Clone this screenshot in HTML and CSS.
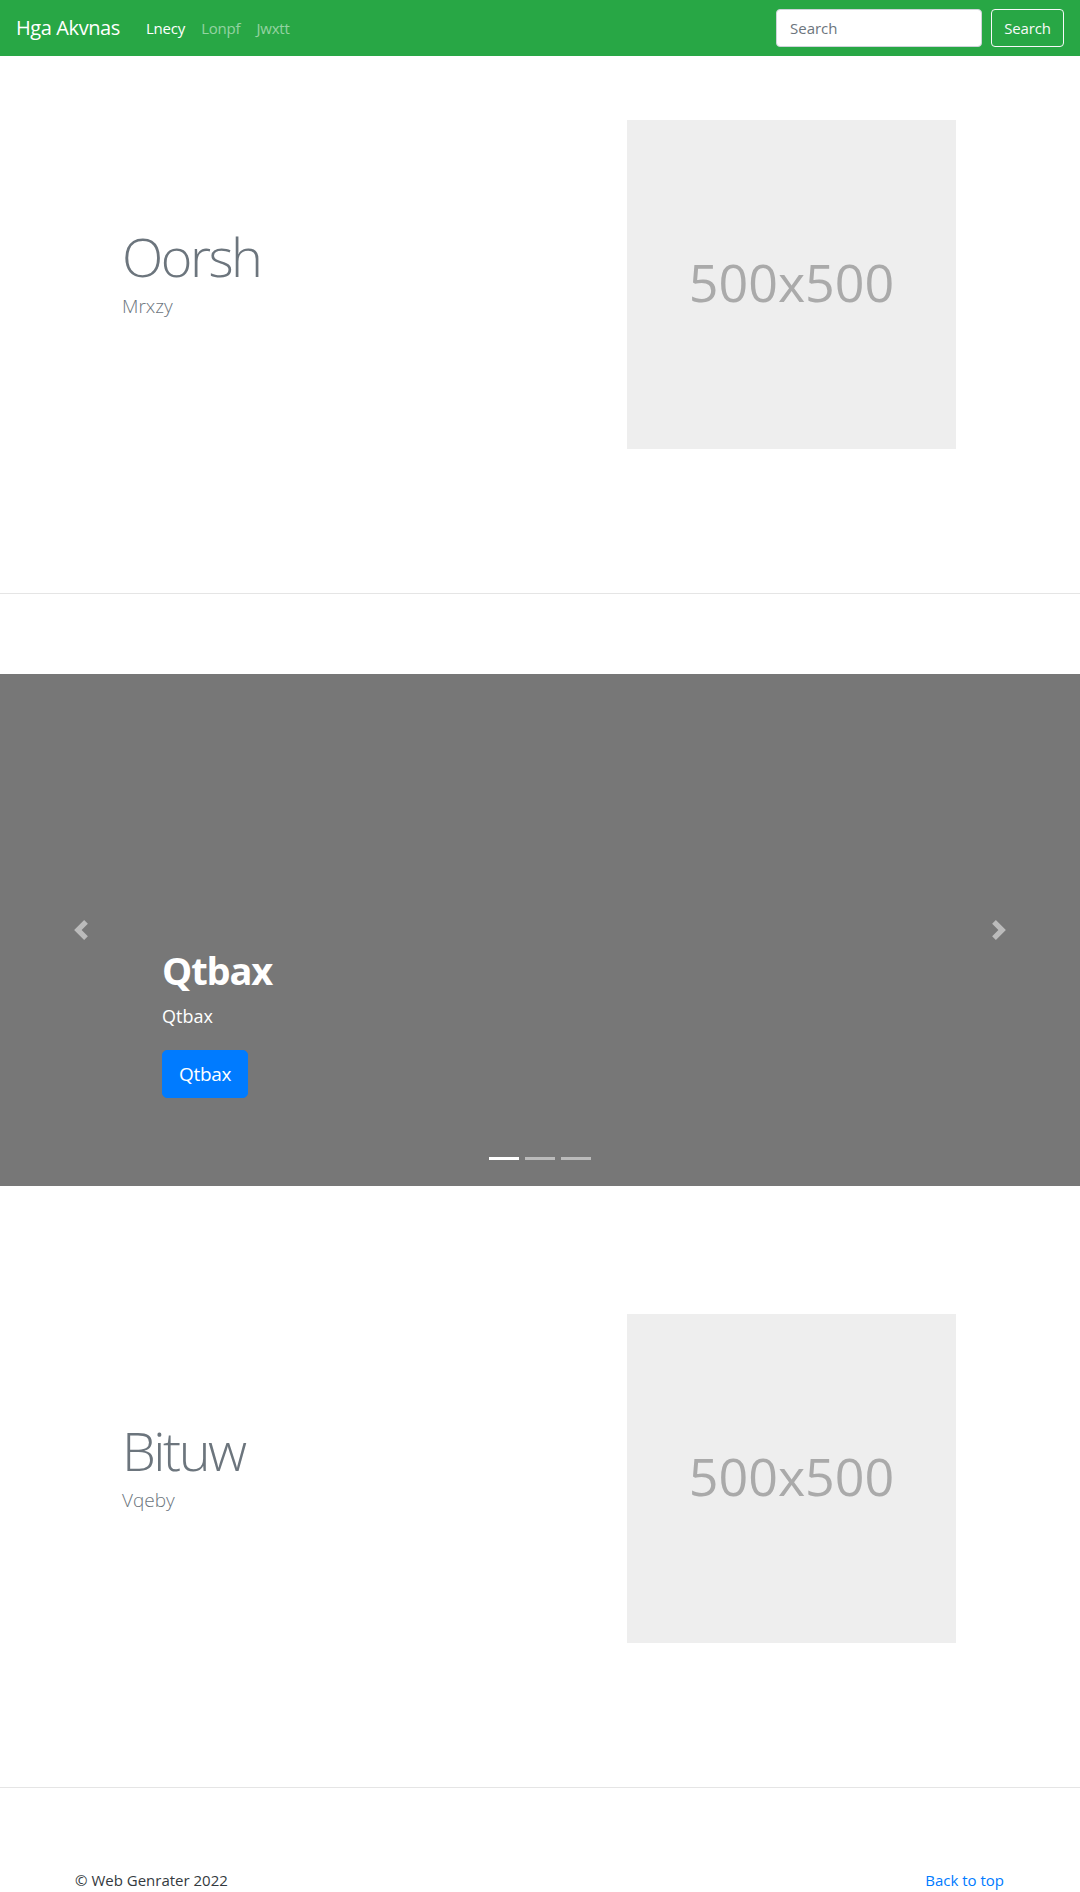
FILE: index.html
```html
<!DOCTYPE html>
<html lang="en">
<head>
<meta charset="utf-8">
<title>Hga Akvnas</title>
<link rel="stylesheet" href="styles.css">
</head>
<body>
<header class="navbar">
  <a class="brand" href="#">Hga Akvnas</a>
  <nav class="nav">
    <a class="nav-link active" href="#">Lnecy</a>
    <a class="nav-link" href="#">Lonpf</a>
    <a class="nav-link" href="#">Jwxtt</a>
  </nav>
  <form class="search">
    <input class="search-input" type="text" placeholder="Search">
    <button class="search-btn" type="button">Search</button>
  </form>
</header>

<main>
  <section class="featurette">
    <div class="feat-text">
      <h2 class="feat-heading">Oorsh</h2>
      <p class="feat-lead">Mrxzy</p>
    </div>
    <div class="placeholder"><span>500x500</span></div>
  </section>

  <hr class="divider">

  <section class="carousel">
    <a class="ctrl ctrl-prev" href="#">
      <svg viewBox="0 0 8 8" width="20" height="20"><path fill="#fff" d="M5.25 0l-4 4 4 4 1.5-1.5-2.5-2.5 2.5-2.5-1.5-1.5z"/></svg>
    </a>
    <div class="caption">
      <h1 class="cap-title">Qtbax</h1>
      <p class="cap-text">Qtbax</p>
      <a class="btn-primary" href="#">Qtbax</a>
    </div>
    <a class="ctrl ctrl-next" href="#">
      <svg viewBox="0 0 8 8" width="20" height="20"><path fill="#fff" d="M2.75 0l-1.5 1.5 2.5 2.5-2.5 2.5 1.5 1.5 4-4-4-4z"/></svg>
    </a>
    <ol class="indicators">
      <li class="ind active"></li>
      <li class="ind"></li>
      <li class="ind"></li>
    </ol>
  </section>

  <section class="featurette featurette-2">
    <div class="feat-text">
      <h2 class="feat-heading">Bituw</h2>
      <p class="feat-lead">Vqeby</p>
    </div>
    <div class="placeholder"><span>500x500</span></div>
  </section>

  <hr class="divider">
</main>

<footer class="footer">
  <p class="copy">© Web Genrater 2022</p>
  <a class="top-link" href="#">Back to top</a>
</footer>
</body>
</html>
```

FILE: styles.css
```css
* { box-sizing: border-box; }

html, body {
  margin: 0;
  padding: 0;
}

body {
  font-family: "Open Sans", "Noto Sans", sans-serif;
  font-size: 16px;
  line-height: 1.5;
  color: #212529;
  background: #fff;
  width: 1080px;
  height: 1892px;
  overflow: hidden;
}

a { text-decoration: none; }

/* Navbar */
.navbar {
  display: flex;
  align-items: center;
  height: 56px;
  padding: 0 16px;
  background: #28a745;
}

.brand {
  color: #fff;
  font-size: 20px;
  line-height: 30px;
  margin-right: 18px;
  letter-spacing: -0.4px;
}

.nav {
  display: flex;
}

.nav-link {
  padding: 0 8px;
  color: rgba(255, 255, 255, 0.5);
  font-size: 15px;
  line-height: 24px;
  letter-spacing: -0.2px;
}

.nav-link.active { color: #fff; }

.search {
  display: flex;
  align-items: center;
  margin-left: auto;
}

.search-input {
  width: 206px;
  height: 38px;
  padding: 6px 13px;
  border: 1px solid #ced4da;
  border-radius: 4px;
  font-family: inherit;
  font-size: 15px;
  color: #495057;
  background: #fff;
  outline: none;
}

.search-input::placeholder { color: #6c757d; }

.search-btn {
  margin-left: 9px;
  width: 73px;
  height: 38px;
  padding: 0;
  border: 1px solid #f8f9fa;
  border-radius: 4px;
  background: transparent;
  color: #f8f9fa;
  font-family: inherit;
  font-size: 15px;
  letter-spacing: -0.2px;
}

/* Featurettes */
.featurette {
  display: flex;
  align-items: center;
  padding: 64px 124px 64px 122px;
}

.feat-text {
  flex: 1;
}

.feat-heading {
  margin: 0 0 7px;
  font-size: 54px;
  font-weight: 300;
  line-height: 56px;
  color: #6c757d;
  letter-spacing: -2.5px;
}

.feat-lead {
  margin: 0 0 21px;
  font-size: 19px;
  font-weight: 300;
  line-height: 30px;
  color: #6c757d;
}

.placeholder {
  width: 329px;
  height: 329px;
  background: #eee;
  display: flex;
  align-items: center;
  justify-content: center;
}

.placeholder span {
  font-size: 52px;
  color: #aaa;
  line-height: 1;
  margin-top: -6px;
}

.divider {
  margin: 80px 0;
  border: 0;
  border-top: 1px solid rgba(0, 0, 0, 0.1);
  height: 0;
}

/* Carousel */
.carousel {
  position: relative;
  height: 512px;
  background: #777;
  margin-bottom: 64px;
}

.ctrl {
  position: absolute;
  top: 0;
  bottom: 0;
  width: 15%;
  display: flex;
  align-items: center;
  justify-content: center;
  opacity: 0.5;
}

.ctrl-prev { left: 0; }
.ctrl-next { right: 0; }

.caption {
  position: absolute;
  left: 162px;
  bottom: 88px;
  display: flex;
  flex-direction: column;
  align-items: flex-start;
  color: #fff;
}

.cap-title {
  margin: 0 0 10px;
  font-size: 38px;
  font-weight: 700;
  line-height: 48px;
  letter-spacing: -1.1px;
}

.cap-text {
  margin: 0 0 22px;
  font-size: 18px;
  line-height: 24px;
}

.btn-primary {
  display: inline-block;
  padding: 8px 16px;
  border: 1px solid #007bff;
  border-radius: 5px;
  background: #007bff;
  color: #fff;
  font-size: 19px;
  line-height: 30px;
  letter-spacing: -0.3px;
}

.indicators {
  position: absolute;
  left: 0;
  right: 0;
  bottom: 26px;
  margin: 0;
  padding: 0;
  list-style: none;
  display: flex;
  justify-content: center;
  gap: 6px;
}

.ind {
  width: 30px;
  height: 3px;
  background: #fff;
  opacity: 0.5;
}

.ind.active { opacity: 1; }

/* Footer */
.footer {
  display: flex;
  justify-content: space-between;
  align-items: flex-start;
  padding: 0 76px 0 75px;
}

.copy {
  margin: 0;
  font-size: 15px;
  line-height: 24px;
  color: #343a40;
}

.top-link {
  font-size: 15px;
  line-height: 24px;
  color: #007bff;
}
```
